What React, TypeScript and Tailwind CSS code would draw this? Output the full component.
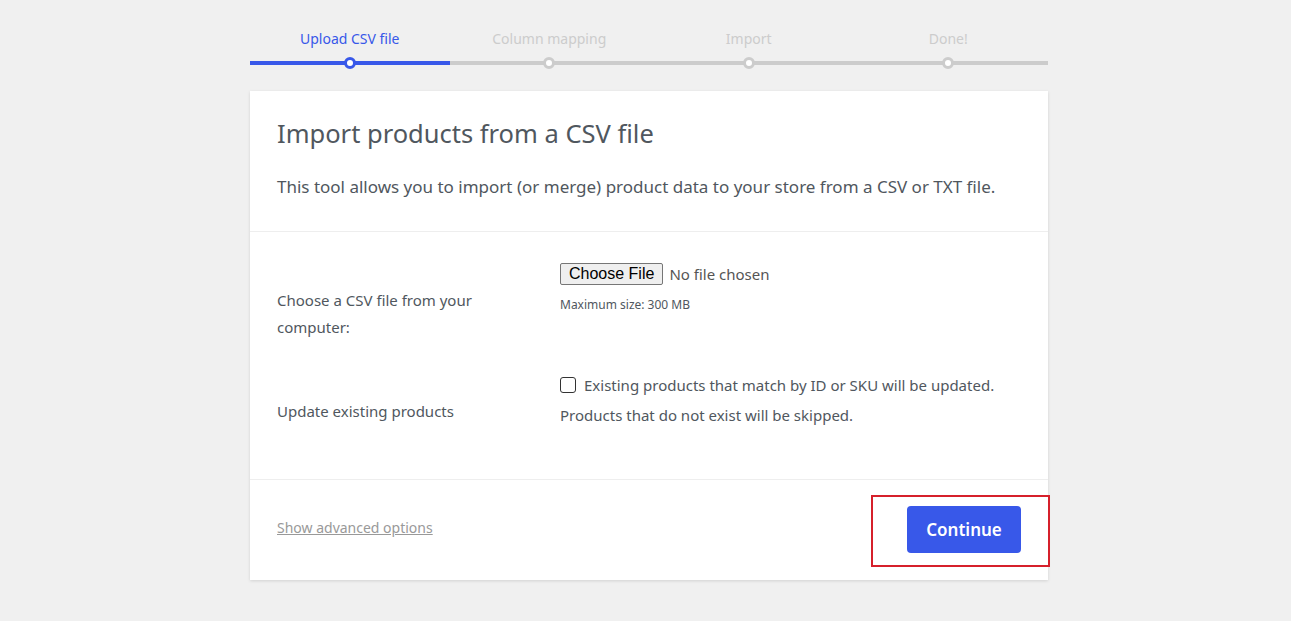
const font = { fontFamily: '"Segoe UI", "Noto Sans", "Open Sans", sans-serif' }

const STEPS = ['Upload CSV file', 'Column mapping', 'Import', 'Done!']

function Steps() {
  return (
    <ol className="flex w-[798px]">
      {STEPS.map((step, i) => {
        const active = i === 0
        return (
          <li key={step} className="flex w-[200px] flex-col items-center">
            <span
              className={`text-[14px] leading-5 ${active ? 'text-[#3858e9]' : 'text-[#cccccc]'}`}
            >
              {step}
            </span>
            <div className="relative mt-[12px] h-[4px] w-full">
              <div className={`h-full w-full ${active ? 'bg-[#3858e9]' : 'bg-[#cccccc]'}`} />
              <span
                className={`absolute top-1/2 left-1/2 size-[12px] -translate-x-1/2 -translate-y-1/2 rounded-full border-[3px] bg-white ${active ? 'border-[#3858e9]' : 'border-[#cccccc]'}`}
              />
            </div>
          </li>
        )
      })}
    </ol>
  )
}

export default function App() {
  return (
    <div className="min-h-[621px] bg-[#f0f0f0] pt-[29px] text-[#50575e]" style={font}>
      <div className="ml-[250px] flex w-[798px] flex-col">
        <Steps />

        <div className="mt-[26px] bg-white shadow-[0_1px_3px_rgba(0,0,0,0.13)]">
          <header className="border-b border-[#eeeeee] px-[27px] pt-[26px] pb-[32px]">
            <h1 className="text-[25.5px] leading-8 text-[#50575e]">Import products from a CSV file</h1>
            <p className="mt-[26px] text-[17px] leading-6">
              This tool allows you to import (or merge) product data to your store from a CSV or TXT
              file.
            </p>
          </header>

          <section className="border-b border-[#eeeeee] px-[27px] pt-[31px] pb-[54px]">
            <div className="flex">
              <label className="mt-[24px] w-[283px] text-[15px] leading-[27px]">
                Choose a CSV file from your
                <br />
                computer:
              </label>
              <div className="flex flex-col">
                <div className="flex items-center gap-[6px]">
                  <span
                    className="rounded-[2px] border border-[#767676] bg-[#efefef] px-[8px] text-[16px] leading-[20px] text-black"
                    style={{ fontFamily: '"Liberation Sans", Arial, sans-serif' }}
                  >
                    Choose File
                  </span>
                  <span className="text-[15px] leading-5 text-[#555555]">No file chosen</span>
                </div>
                <span className="mt-[12px] text-[12px] leading-4">Maximum size: 300 MB</span>
              </div>
            </div>

            <div className="mt-[34px] flex">
              <label className="mt-[23px] w-[283px] text-[15px] leading-[27px]">
                Update existing products
              </label>
              <div className="flex flex-col text-[15px]">
                <div className="flex items-center gap-[8px] leading-5">
                  <span className="size-[16px] rounded-[3px] border border-[#333333] bg-white" />
                  <span>Existing products that match by ID or SKU will be updated.</span>
                </div>
                <span className="mt-[10px] leading-5">Products that do not exist will be skipped.</span>
              </div>
            </div>
          </section>

          <footer className="flex items-center justify-between px-[27px] pt-[26px] pb-[27px]">
            <a className="mb-[4px] text-[14px] text-[#999999] underline">Show advanced options</a>
            <div className="relative">
              <button className="h-[47px] w-[114px] rounded-[4px] bg-[#3858e9] text-[17px] font-semibold text-white">
                Continue
              </button>
              <span className="pointer-events-none absolute -top-[11px] -right-[29px] -bottom-[14px] -left-[36px] border-2 border-[#d6202b]" />
            </div>
          </footer>
        </div>
      </div>
    </div>
  )
}
